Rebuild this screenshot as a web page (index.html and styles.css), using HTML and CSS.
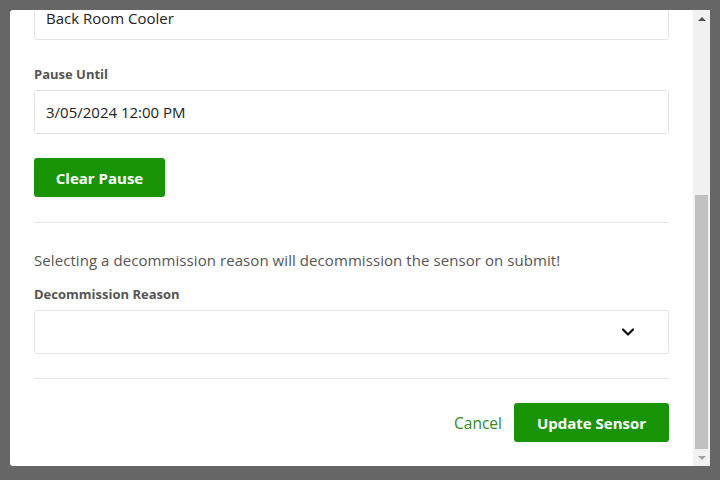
FILE: index.html
```html
<!DOCTYPE html>
<html lang="en">
<head>
<meta charset="utf-8">
<title>Edit Sensor</title>
<link rel="stylesheet" href="styles.css">
</head>
<body>
<div class="modal">
  <div class="modal-scroll" id="scroller">
    <div class="modal-header">
      <h2 class="modal-title">Edit Sensor</h2>
    </div>
    <div class="modal-body">
      <div class="field">
        <label class="label">Sensor ID</label>
        <div class="input">SN-004821</div>
      </div>
      <div class="field">
        <label class="label">Location</label>
        <div class="input">Main Store</div>
      </div>
      <div class="field">
        <label class="label">Sensor Name</label>
        <div class="input">Back Room Cooler</div>
      </div>
      <div class="field">
        <label class="label">Pause Until</label>
        <div class="input">3/05/2024 12:00 PM</div>
      </div>
      <button class="btn btn-primary">Clear Pause</button>
      <hr class="divider divider-first">
      <p class="note">Selecting a decommission reason will decommission the sensor on submit!</p>
      <div class="field">
        <label class="label">Decommission Reason</label>
        <div class="input select">
          <span></span>
          <svg class="chevron" width="14" height="10" viewBox="0 0 14 10"><path d="M2 2.5 L7 7.5 L12 2.5" fill="none" stroke="#111" stroke-width="2.2" stroke-linecap="round" stroke-linejoin="round"/></svg>
        </div>
      </div>
      <hr class="divider">
      <div class="footer">
        <a class="link">Cancel</a>
        <button class="btn btn-primary btn-wide">Update Sensor</button>
      </div>
    </div>
  </div>
  <div class="scrollbar">
    <div class="sb-btn"><svg width="8" height="4" viewBox="0 0 8 4"><path d="M0 4 L4 0 L8 4 Z" fill="#505050"/></svg></div>
    <div class="sb-track"><div class="sb-thumb"></div></div>
    <div class="sb-btn"><svg width="8" height="4" viewBox="0 0 8 4"><path d="M0 0 L8 0 L4 4 Z" fill="#a3a3a3"/></svg></div>
  </div>
</div>
<script src="script.js"></script>
</body>
</html>
```
FILE: styles.css
```css
* { box-sizing: border-box; }
html, body { margin: 0; height: 100%; }
body {
  background: #666666;
  padding: 10px;
  font-family: "Open Sans", "Noto Sans", Arial, sans-serif;
  color: #222;
}
.modal {
  width: 700px;
  height: 456px;
  background: #fff;
  border-radius: 3px 0 0 3px;
  overflow: hidden;
  display: flex;
}
.modal-scroll {
  flex: 1;
  height: 100%;
  overflow: hidden;
}
.scrollbar {
  width: 17px;
  background: #f1f1f1;
  display: flex;
  flex-direction: column;
}
.sb-btn {
  height: 17px;
  display: flex;
  align-items: center;
  justify-content: center;
}
.sb-btn svg { display: block; }
.sb-track {
  flex: 1;
  display: flex;
  flex-direction: column;
  justify-content: flex-end;
  padding: 0 2px;
}
.sb-thumb {
  height: 254px;
  background: #c1c1c1;
}
.modal-header {
  padding: 10px 24px;
  border-bottom: 1px solid #e5e5e5;
}
.modal-title {
  margin: 0;
  font-size: 18px;
  line-height: 25px;
  font-weight: 600;
}
.modal-body {
  padding: 24px;
}
.field { margin-bottom: 24px; }
.label {
  display: block;
  font-size: 13px;
  line-height: 20px;
  font-weight: 700;
  color: #555;
  margin-bottom: 6px;
}
.input {
  height: 44px;
  border: 1px solid #e3e3e3;
  border-radius: 3px;
  padding: 0 11px;
  display: flex;
  align-items: center;
  font-size: 15px;
  color: #222;
}
.select { justify-content: space-between; padding-right: 33px; }
.chevron { display: block; }
.btn {
  display: inline-flex;
  align-items: center;
  justify-content: center;
  height: 39px;
  border: 0;
  border-radius: 3px;
  font-family: inherit;
  font-size: 15px;
  font-weight: 700;
  cursor: pointer;
}
.btn-primary {
  background: #1a9407;
  color: #fff;
  width: 131px;
}
.btn-wide { width: 155px; }
.divider {
  border: 0;
  border-top: 1px solid #e5e5e5;
  margin: 24px 0;
}
.divider-first { margin-top: 25px; }
.note {
  margin: 0 0 12px;
  padding-top: 1px;
  font-size: 15px;
  letter-spacing: 0.07px;
  line-height: 24px;
  color: #555;
}
.footer {
  display: flex;
  justify-content: flex-end;
  align-items: center;
  gap: 12px;
}
.link {
  color: #2f8a1f;
  font-size: 15.5px;
}
```
FILE: script.js
```js
var s = document.getElementById('scroller');
s.scrollTop = s.scrollHeight;
```
